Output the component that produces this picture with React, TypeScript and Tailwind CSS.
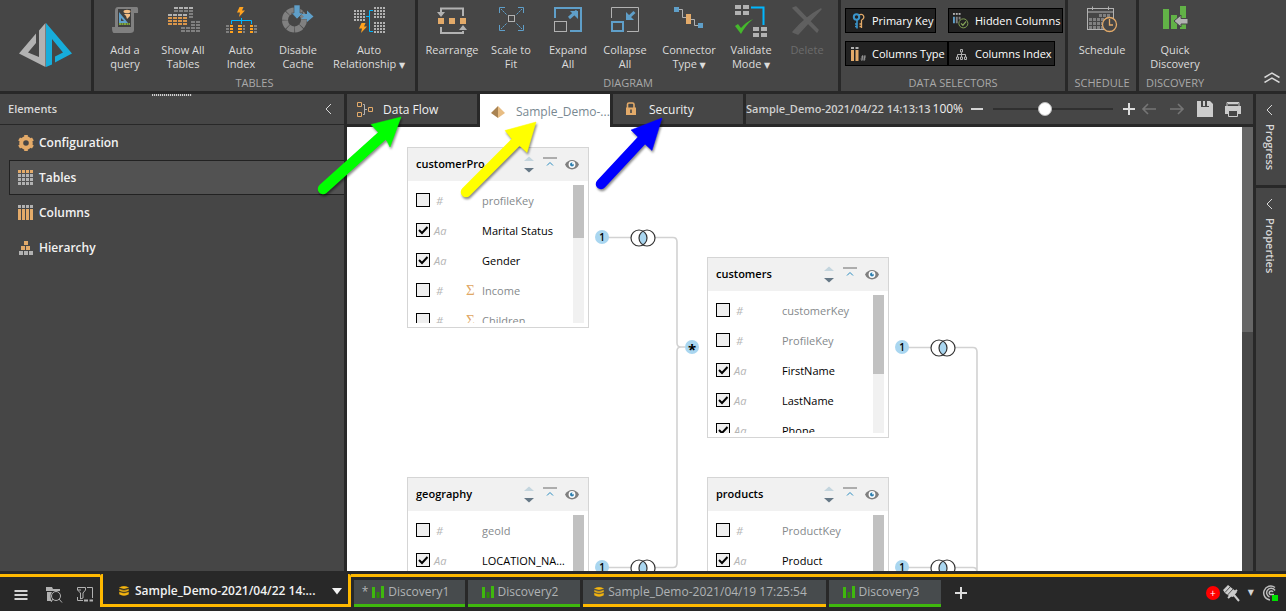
import React, { useState } from "react";

const GRAY = "#b2b2b2";
const DIM = "#808080";
const ORANGE = "#e3aa69";
const BLUE = "#5f9fc9";
const CYAN = "#00b7ff";

type CellsProps = { x: number; y: number; cols: number; rows: number; w?: number; h?: number; dx?: number; dy?: number; fill?: string };

function Cells({ x, y, cols, rows, w = 4, h = 2, dx = 5, dy = 3, fill = DIM }: CellsProps) {
  const out: React.ReactNode[] = [];
  for (let r = 0; r < rows; r++)
    for (let c = 0; c < cols; c++)
      out.push(<rect key={`${r}-${c}`} x={x + c * dx} y={y + r * dy} width={w} height={h} fill={fill} />);
  return <g>{out}</g>;
}

function Glyph({ box, className, children }: { box: string; className?: string; children: React.ReactNode }) {
  return (
    <svg viewBox={box} className={className ?? "h-8 w-9"} fill="none" aria-hidden="true">
      {children}
    </svg>
  );
}

const Bolt = ({ x, y }: { x: number; y: number }) => (
  <path transform={`translate(${x} ${y})`} d="M2.5 0H6.5L5 3.5H8L2 10L3 5.5H0Z" fill="#ffa21f" />
);

const icons = {
  query: (
    <Glyph box="107 5 36 32">
      <path d="M118 7H137Q138.500 7 138 13H134V30Q134 33 130 33H114Q112 33 112 27H115V11Q115 7 118 7Z" fill={DIM} />
      <rect x="118" y="9" width="13" height="18" fill="#3f3f3f" />
      <path d="M119 12V23H128Z" fill={BLUE} />
      <path d="M121 18V21H124Z" fill="#3f3f3f" />
      <ellipse cx="127" cy="11.500" rx="3.500" ry="1.800" fill="#f2bd86" />
      <path d="M124 14H130V16L127 19L126 16Z" fill="#f2bd86" />
      <path d="M119 24H130" stroke="#7fa63a" strokeWidth="2" strokeDasharray="2 .5" />
    </Glyph>
  ),
  showAll: (
    <Glyph box="165 5 36 32">
      <Cells x={174} y={7} cols={4} rows={1} fill={GRAY} />
      <Cells x={174} y={10} cols={4} rows={1} />
      <Cells x={189} y={13} cols={1} rows={2} />
      <Cells x={168} y={14} cols={4} rows={1} fill={GRAY} />
      <Cells x={168} y={17} cols={4} rows={3} fill="#d9954a" />
      <Cells x={191} y={21} cols={2} rows={2} />
      <Cells x={181} y={27} cols={4} rows={2} />
    </Glyph>
  ),
  autoIndex: (
    <Glyph box="224 5 36 32">
      <Bolt x={238} y={7} />
      <path d="M232.500 24V20.500H252.500V24M242.500 18V24" stroke={CYAN} />
      <Cells x={227} y={25} cols={1} rows={3} w={3} />
      <Cells x={231} y={25} cols={1} rows={3} w={3} fill="#ffa21f" />
      <Cells x={239} y={25} cols={1} rows={3} w={4} fill="#ffa21f" />
      <Cells x={244} y={25} cols={1} rows={3} w={2} />
      <Cells x={251} y={25} cols={1} rows={3} w={3} fill="#ffa21f" />
      <Cells x={255} y={25} cols={1} rows={3} w={3} />
    </Glyph>
  ),
  cache: (
    <Glyph box="281 5 36 32">
      <circle cx="295.500" cy="20" r="9.500" stroke={DIM} strokeWidth="6" strokeDasharray="6.860 .6" />
      <path d="M295 5H301V13H304L298 19L292.500 13H295Z" fill={BLUE} stroke="#464646" strokeWidth=".6" />
      <path d="M302 14H308V10.500L314.500 16.500L308 22V19H302L305 16.500Z" fill={BLUE} />
    </Glyph>
  ),
  relationship: (
    <Glyph box="351 5 36 32">
      <Cells x={354} y={10} cols={4} rows={4} w={2} dx={3} fill={GRAY} />
      <Cells x={374} y={7} cols={4} rows={4} w={2} dx={3} fill={GRAY} />
      <Cells x={374} y={22} cols={4} rows={4} w={2} dx={3} fill={GRAY} />
      <path d="M373 10.500H369.500V31.500H373M366 16.500H369.500" stroke={CYAN} />
      <Bolt x={359} y={23} />
    </Glyph>
  ),
  rearrange: (
    <Glyph box="435 5 36 32">
      <path d="M442 14V8.500H464V16M442 27V33H464V31" stroke={GRAY} strokeWidth="2" />
      <path d="M438 12H446L442 17ZM460 30H468L464 25Z" fill={GRAY} />
      <Cells x={439} y={18} cols={3} rows={1} w={6} h={6} dx={11} fill={ORANGE} />
    </Glyph>
  ),
  scale: (
    <Glyph box="494 5 36 32">
      <path d="M500.500 13V7.500H506M519 7.500H524.500V13M524.500 25V30.500H519M506 30.500H500.500V25" stroke={BLUE} />
      <path d="M502 9L508 15M523 9L517 15M502 29L508 23M523 29L517 23" stroke={BLUE} strokeDasharray="2 .6" />
      <rect x="509.500" y="15.500" width="6" height="6" stroke={GRAY} />
    </Glyph>
  ),
  expand: (
    <Glyph box="550 5 36 32">
      <path d="M555 18V8H581V31H570" stroke={BLUE} strokeWidth="2" />
      <rect x="554.500" y="21.500" width="12" height="10" stroke={GRAY} />
      <path d="M569 18L577 11" stroke={BLUE} strokeWidth="3" />
      <path d="M570 11H578V19Z" fill={BLUE} />
    </Glyph>
  ),
  collapse: (
    <Glyph box="608 5 36 32">
      <path d="M612.500 18V7.500H639.500V31.500H628" stroke={GRAY} />
      <rect x="613" y="22" width="11" height="9" stroke={BLUE} strokeWidth="2" />
      <path d="M635.500 12L629 18" stroke={BLUE} strokeWidth="3" />
      <path d="M627 12V20H635Z" fill={BLUE} />
    </Glyph>
  ),
  connector: (
    <Glyph box="672 5 36 32">
      <path d="M680 9.500H683.500V17.500H687M692 19.500H695.500V25.500H699" stroke={GRAY} />
      <rect x="675" y="7" width="5" height="5" fill={BLUE} />
      <rect x="687" y="14" width="5" height="10" fill={ORANGE} />
      <rect x="699" y="23" width="5" height="5" fill={BLUE} />
    </Glyph>
  ),
  validate: (
    <Glyph box="733 5 36 32">
      <Cells x={735} y={5} cols={2} rows={2} w={6} h={4} dx={8} dy={6} fill={GRAY} />
      <Cells x={753} y={27} cols={2} rows={2} w={6} h={4} dx={8} dy={6} fill={GRAY} />
      <path d="M751 7.500H763.500V25" stroke={CYAN} strokeWidth="2" />
      <path d="M735 26L738 24L741 28Q746 22 753 19Q745 26 741 34Z" fill="#45b82c" />
    </Glyph>
  ),
  remove: (
    <Glyph box="789 5 36 32">
      <path d="M793 8L796 7L818 30L817 32ZM821 9L798 34L793 32Q806 17 821 9Z" fill="#606060" stroke="#606060" strokeWidth="1.500" strokeLinejoin="round" />
    </Glyph>
  ),
  schedule: (
    <Glyph box="1084 5 36 32">
      <rect x="1087.500" y="8.500" width="26" height="21" stroke={GRAY} />
      <path d="M1087 12H1114M1092.500 6.500V10M1108.500 6.500V10" stroke={GRAY} />
      <Cells x={1099} y={14} cols={3} rows={1} w={3} h={3} dx={4} />
      <Cells x={1089} y={18} cols={6} rows={2} w={3} h={3} dx={4} dy={4} />
      <Cells x={1089} y={26} cols={4} rows={1} w={3} h={3} dx={4} />
      <circle cx="1109.500" cy="24.500" r="7" stroke={ORANGE} strokeWidth="1.300" fill="#464646" />
      <path d="M1109.500 19V25H1113" stroke={ORANGE} strokeWidth="1.300" />
    </Glyph>
  ),
  discovery: (
    <Glyph box="1157 5 36 32">
      <path d="M1163 9H1169V29H1163ZM1171 15H1177V29H1171ZM1180 6H1186V29H1180Z" fill="#62b247" />
      <path d="M1174 21L1181 15V18.500H1188V24H1181V27Z" fill={GRAY} stroke="#464646" />
    </Glyph>
  ),
};

function RibbonButton({ icon, lines, width, menu, disabled }: { icon: React.ReactNode; lines: string[]; width: string; menu?: boolean; disabled?: boolean }) {
  return (
    <button type="button" disabled={disabled} className={`flex ${width} flex-none flex-col items-center pt-[5px] text-[11px] leading-[14px] ${disabled ? "text-[#6c6c6c]" : "text-[#dcdcdc]"}`}>
      {icon}
      <span className="mt-1.5 whitespace-nowrap">
        {lines.map((l, i) => (
          <span key={l} className="block">
            {l}
            {menu && i === lines.length - 1 ? <span className="font-['DejaVu_Sans'] text-[8px]"> ▼</span> : null}
          </span>
        ))}
      </span>
    </button>
  );
}

function Section({ title, className, children }: { title: string; className?: string; children: React.ReactNode }) {
  return (
    <section className={`flex flex-col justify-between bg-[#464646] ${className ?? ""}`}>
      {children}
      <h2 className="pb-px text-center text-[11px] leading-[14px] text-[#a9a9a9]">{title}</h2>
    </section>
  );
}

function SelectorButton({ label, children }: { label: string; children: React.ReactNode }) {
  return (
    <button type="button" className="flex h-[25px] items-center gap-1.5 border border-black bg-[#222222] pr-0.5 pl-1 text-[11px] whitespace-nowrap text-white">
      {children}
      <span className="pt-0.5">{label}</span>
    </button>
  );
}

function Ribbon() {
  return (
    <header className="flex h-[91px] flex-none gap-[3px]">
      <div className="flex w-[91px] flex-none items-center justify-center bg-[#464646]">
        <svg viewBox="20 22 53 46" className="h-[46px] w-[53px]" role="img" aria-label="Pyramid">
          <path d="M46.500 22L40 29.500V56L29 51.500L37 42V32.500L20 52.500L46.500 66Z" fill={GRAY} />
          <path d="M47 22L73 52.500L56 61.500V55.500L64 51.500L53 38V63.500L47 66Z" fill="#17addb" />
        </svg>
      </div>
      <Section title="TABLES" className="w-[321px] flex-none">
        <div className="flex pl-0.5">
          <RibbonButton icon={icons.query} lines={["Add a", "query"]} width="w-[58px]" />
          <RibbonButton icon={icons.showAll} lines={["Show All", "Tables"]} width="w-[58px]" />
          <RibbonButton icon={icons.autoIndex} lines={["Auto", "Index"]} width="w-[58px]" />
          <RibbonButton icon={icons.cache} lines={["Disable", "Cache"]} width="w-[56px]" />
          <RibbonButton icon={icons.relationship} lines={["Auto", "Relationship"]} width="w-[86px]" menu />
        </div>
      </Section>
      <Section title="DIAGRAM" className="w-[420px] flex-none">
        <div className="flex pl-1">
          <RibbonButton icon={icons.rearrange} lines={["Rearrange"]} width="w-[60px]" />
          <RibbonButton icon={icons.scale} lines={["Scale to", "Fit"]} width="w-[58px]" />
          <RibbonButton icon={icons.expand} lines={["Expand", "All"]} width="w-[56px]" />
          <RibbonButton icon={icons.collapse} lines={["Collapse", "All"]} width="w-[58px]" />
          <RibbonButton icon={icons.connector} lines={["Connector", "Type"]} width="w-[70px]" menu />
          <RibbonButton icon={icons.validate} lines={["Validate", "Mode"]} width="w-[54px]" menu />
          <RibbonButton icon={icons.remove} lines={["Delete"]} width="w-[58px]" disabled />
        </div>
      </Section>
      <Section title="DATA SELECTORS" className="w-[224px] flex-none">
        <div className="grid grid-cols-[101px_auto] justify-items-start gap-x-0.5 gap-y-2 pt-2 pl-1">
          <SelectorButton label="Primary Key">
            <Glyph box="0 0 16 16" className="h-4 w-4">
              <path d="M9 2.500A2.700 2.700 0 1 1 11.500 6.800M11.500 7V15M11.500 11H9.500M11.500 13.500H9.500" stroke={ORANGE} strokeWidth="1.300" />
              <circle cx="6.500" cy="4" r="2.700" stroke="#3a95cc" strokeWidth="2" />
              <path d="M7 7V15.500M7 11H5M7 13.500H5" stroke="#3a95cc" strokeWidth="1.600" />
            </Glyph>
          </SelectorButton>
          <SelectorButton label="Hidden Columns">
            <Glyph box="1 0 17 17" className="h-4 w-4">
              <Cells x={1} y={0} cols={3} rows={1} w={2} h={2} dx={3} fill={GRAY} />
              <path d="M2 4V11" stroke={BLUE} strokeWidth="2" />
              <path d="M5 4V11M8 4V7" stroke={DIM} strokeWidth="2" />
              <circle cx="12" cy="11" r="4.800" stroke="#86a558" />
              <path d="M9.500 11L11.500 13L15 9" stroke="#86a558" strokeWidth="1.300" />
            </Glyph>
          </SelectorButton>
          <SelectorButton label="Columns Type">
            <Glyph box="0 0 16 16" className="h-4 w-4">
              <path d="M1 1H4V3H1ZM5.500 1H8.500V3H5.500Z" fill={GRAY} />
              <path d="M1 4H4V15H1ZM5.500 4H8.500V15H5.500Z" fill={ORANGE} />
              <path d="M12.800 9L11.800 15M15 9L14 15M11 11H16M10.500 13H15.500" stroke={GRAY} strokeWidth=".7" />
            </Glyph>
          </SelectorButton>
          <SelectorButton label="Columns Index">
            <Glyph box="0 0 16 16" className="h-4 w-4">
              <path d="M8.500 6.500V9M4.500 11V8.500H12.500V11M8.500 8V11" stroke={GRAY} />
              <path d="M7.500 3.500H9.500V6H7.500ZM3.500 11H5.500V13.500H3.500ZM7.500 11H9.500V13.500H7.500ZM11.500 11H13.500V13.500H11.500Z" stroke={GRAY} />
            </Glyph>
          </SelectorButton>
        </div>
      </Section>
      <Section title="SCHEDULE" className="w-[68px] flex-none">
        <div className="flex justify-center">
          <RibbonButton icon={icons.schedule} lines={["Schedule"]} width="w-[68px]" />
        </div>
      </Section>
      <div className="flex flex-1 justify-between bg-[#464646]">
        <Section title="DISCOVERY" className="w-[72px]">
          <div className="flex">
            <RibbonButton icon={icons.discovery} lines={["Quick", "Discovery"]} width="w-[72px]" />
          </div>
        </Section>
        <button type="button" aria-label="Collapse ribbon" className="self-end px-1.5 pb-2">
          <Glyph box="0 0 16 11" className="h-[11px] w-4">
            <path d="M.5 5.500L8 1L15.500 5.500M.5 10.500L8 6L15.500 10.500" stroke="#d8d8d8" strokeWidth="1.500" />
          </Glyph>
        </button>
      </div>
    </header>
  );
}

const elementItems = [
  {
    name: "Configuration",
    icon: (
      <Glyph box="0 0 16 16" className="h-4 w-4">
        <circle cx="8" cy="8" r="4.800" stroke={ORANGE} strokeWidth="4" />
        <path d="M8 0V2M8 14V16M1.100 4L2.800 5M13.200 11L14.900 12M1.100 12L2.800 11M13.200 5L14.900 4" stroke={ORANGE} strokeWidth="3.600" />
      </Glyph>
    ),
  },
  {
    name: "Tables",
    icon: (
      <Glyph box="0 0 16 16" className="h-4 w-4">
        <Cells x={0} y={0} cols={4} rows={1} w={3} h={3} dx={4} fill={ORANGE} />
        <Cells x={0} y={4} cols={4} rows={3} w={3} h={3} dx={4} dy={4} fill={GRAY} />
      </Glyph>
    ),
  },
  {
    name: "Columns",
    icon: (
      <Glyph box="0 0 16 16" className="h-4 w-4">
        <Cells x={0} y={0} cols={4} rows={1} w={3} h={3} dx={4} fill={GRAY} />
        <Cells x={0} y={4} cols={4} rows={1} w={3} h={11} dx={4} fill={ORANGE} />
      </Glyph>
    ),
  },
  {
    name: "Hierarchy",
    icon: (
      <Glyph box="0 0 16 16" className="h-4 w-4">
        <Cells x={6} y={1} cols={1} rows={1} w={4} h={4} fill={ORANGE} />
        <Cells x={3} y={6} cols={2} rows={1} w={4} h={4} dx={5} fill={ORANGE} />
        <Cells x={1} y={11} cols={3} rows={1} w={4} h={4} dx={5} fill={GRAY} />
      </Glyph>
    ),
  },
];

const ChevronLeft = () => (
  <Glyph box="0 0 7 12" className="h-3 w-[7px]">
    <path d="M6 1L1 6L6 11" stroke="#d8d8d8" />
  </Glyph>
);

function ElementsPanel() {
  const [selected, setSelected] = useState("Tables");
  return (
    <aside className="relative w-[344px] flex-none bg-[#464646]">
      <div className="absolute top-0 left-[152px] h-0.5 w-10 bg-[repeating-linear-gradient(90deg,#d0d0d0_0_1px,#5a5a5a_1px_2px)]" />
      <div className="flex h-[31px] items-center justify-between border-b border-[#282828] pr-3 pl-2">
        <h2 className="text-[11px] font-semibold text-[#d8d8d8]">Elements</h2>
        <button type="button" aria-label="Collapse elements">
          <ChevronLeft />
        </button>
      </div>
      <ul className="pl-[9px]">
        {elementItems.map((it) => (
          <li key={it.name}>
            <button
              type="button"
              onClick={() => setSelected(it.name)}
              className={`flex h-[35px] w-full items-center gap-[5px] border border-r-0 pl-2 text-[12px] font-semibold text-[#f2f2f2] ${selected === it.name ? "border-[#222222] bg-[#525252]" : "border-transparent"}`}
            >
              {it.icon}
              {it.name}
            </button>
          </li>
        ))}
      </ul>
    </aside>
  );
}

function TabBar() {
  const [zoom, setZoom] = useState(43);
  return (
    <div className="flex h-[33px] flex-none gap-[3px] text-[12px] text-[#f0f0f0]">
      <button type="button" className="flex h-[30px] w-[130px] flex-none items-center gap-2.5 bg-[#464646] pl-2.5">
        <Glyph box="0 0 16 16" className="h-4 w-4">
          <path d="M.5 1.500H4.500V5.500H.5ZM.5 11.500H4.500V15.500H.5ZM11.500 6.500H15.500V10.500H11.500Z" stroke={ORANGE} />
          <path d="M6 3.500H7.500V13.500H6M7.500 8.500H10" stroke={GRAY} />
        </Glyph>
        <span className="pt-0.5">Data Flow</span>
      </button>
      <button type="button" className="flex w-[130px] flex-none items-center gap-2.5 bg-white pt-0.5 pl-2.5 whitespace-nowrap text-[#788891]">
        <Glyph box="0 0 16 16" className="h-4 w-4 flex-none">
          <path d="M8 2L1 9L8 14Z" fill="#a98352" />
          <path d="M8 2L15 9L8 14Z" fill="#e8bd83" />
        </Glyph>
        Sample_Demo-...
      </button>
      <button type="button" className="flex h-[30px] w-[130px] flex-none items-center gap-2.5 bg-[#464646] pl-2.5">
        <Glyph box="0 0 16 16" className="h-4 w-4">
          <path d="M4.500 7V3.500Q4.500 2 6 2H9.500Q11 2 11 3.500V7" stroke={ORANGE} strokeWidth="1.600" />
          <path d="M3 6.500H13V14H3Z" fill={ORANGE} />
          <path d="M8 8.500V12" stroke="#464646" strokeWidth="1.600" />
        </Glyph>
        <span className="pt-0.5">Security</span>
      </button>
      <div className="flex h-[30px] min-w-0 flex-1 items-center bg-[#464646] pr-3">
        <span className="text-[11px] font-semibold whitespace-nowrap text-[#d0d0d0]">Sample_Demo-2021/04/22 14:13:13</span>
        <span className="w-10 flex-none pl-0.5">100%</span>
        <button type="button" aria-label="Zoom out" className="h-0.5 w-3 flex-none bg-[#d4d4d4]" />
        <input
          type="range"
          aria-label="Zoom"
          min={0}
          max={100}
          value={zoom}
          onChange={(e) => setZoom(Number(e.target.value))}
          className="mx-2.5 h-0.5 min-w-0 flex-1 appearance-none bg-[#303030] [&::-webkit-slider-thumb]:h-3.5 [&::-webkit-slider-thumb]:w-3.5 [&::-webkit-slider-thumb]:appearance-none [&::-webkit-slider-thumb]:rounded-full [&::-webkit-slider-thumb]:border [&::-webkit-slider-thumb]:border-[#bbbbbb] [&::-webkit-slider-thumb]:bg-white"
        />
        <button type="button" aria-label="Zoom in">
          <Glyph box="0 0 12 12" className="h-3 w-3">
            <path d="M0 6H12M6 0V12" stroke="#dddddd" strokeWidth="2" />
          </Glyph>
        </button>
        <button type="button" aria-label="Undo" className="ml-1.5">
          <Glyph box="0 0 16 12" className="h-3 w-4">
            <path d="M15 6H2M7 1L2 6L7 11" stroke="#757575" strokeWidth="1.600" />
          </Glyph>
        </button>
        <button type="button" aria-label="Redo" className="ml-3">
          <Glyph box="0 0 16 12" className="h-3 w-4">
            <path d="M1 6H14M9 1L14 6L9 11" stroke="#757575" strokeWidth="1.600" />
          </Glyph>
        </button>
        <button type="button" aria-label="Save" className="ml-3">
          <Glyph box="0 0 16 16" className="h-4 w-4">
            <path d="M0 0H13L16 3V16H0Z" fill="#cccccc" />
            <path d="M4 0H12V6H4Z" fill="#464646" />
            <path d="M6 0H8V5H6ZM10 0H12V5H10Z" fill="#cccccc" />
          </Glyph>
        </button>
        <button type="button" aria-label="Print" className="ml-3">
          <Glyph box="0 0 16 16" className="h-4 w-4">
            <path d="M3 2.500H13" stroke="#cccccc" strokeWidth="2" />
            <path d="M0 5H16V13H0Z" fill="#cccccc" />
            <path d="M3.500 9.500H12.500V15.500H3.500Z" fill="#464646" stroke="#cccccc" />
            <path d="M2 5V1.500H14V5" stroke="#cccccc" />
            <path d="M3 3.500H13V5H3Z" fill="#464646" />
          </Glyph>
        </button>
      </div>
    </div>
  );
}

type Field = { name: string; kind: "#" | "Aa"; sum?: boolean; checked?: boolean };
type TableNode = { name: string; place: string; thumb: string; fields: Field[] };

const tables: TableNode[] = [
  {
    name: "customerPro",
    place: "left-[60px] top-5",
    thumb: "h-[53px]",
    fields: [
      { name: "profileKey", kind: "#" },
      { name: "Marital Status", kind: "Aa", checked: true },
      { name: "Gender", kind: "Aa", checked: true },
      { name: "Income", kind: "#", sum: true },
      { name: "Children", kind: "#", sum: true },
    ],
  },
  {
    name: "customers",
    place: "left-[360px] top-[130px]",
    thumb: "h-[79px]",
    fields: [
      { name: "customerKey", kind: "#" },
      { name: "ProfileKey", kind: "#" },
      { name: "FirstName", kind: "Aa", checked: true },
      { name: "LastName", kind: "Aa", checked: true },
      { name: "Phone", kind: "Aa", checked: true },
    ],
  },
  {
    name: "geography",
    place: "left-[60px] top-[350px]",
    thumb: "h-[100px]",
    fields: [
      { name: "geoId", kind: "#" },
      { name: "LOCATION_NAME", kind: "Aa", checked: true },
    ],
  },
  {
    name: "products",
    place: "left-[360px] top-[350px]",
    thumb: "h-[100px]",
    fields: [
      { name: "ProductKey", kind: "#" },
      { name: "Product", kind: "Aa", checked: true },
    ],
  },
];

function FieldRow({ field, table }: { field: Field; table: string }) {
  const id = `${table}-${field.name}`;
  return (
    <li className="flex h-[30px] items-center">
      <span className="grid h-3.5 w-3.5 flex-none">
        <input id={id} type="checkbox" defaultChecked={field.checked} className="peer col-start-1 row-start-1 h-3.5 w-3.5 appearance-none border border-black bg-[#efefef]" />
        <svg viewBox="0 0 14 14" className="pointer-events-none invisible col-start-1 row-start-1 h-3.5 w-3.5 peer-checked:visible" fill="none" aria-hidden="true">
          <path d="M3 7L6 10L11.500 4" stroke="#000" strokeWidth="2" />
        </svg>
      </span>
      <span className={`w-8 flex-none pt-0.5 text-[11px] text-[#b4b4b4] italic ${field.kind === "#" ? "pl-1.5" : "pl-1"}`}>{field.kind}</span>
      <span className="w-5 flex-none pl-1 font-['Liberation_Serif'] text-[15px] text-[#dfa765]">{field.sum ? "Σ" : ""}</span>
      <label htmlFor={id} className={`mr-1 min-w-0 flex-1 truncate pt-0.5 text-[11px] ${field.checked ? "text-black" : "text-[#85898c]"}`}>
        {field.name}
      </label>
    </li>
  );
}

function TableCard({ table }: { table: TableNode }) {
  return (
    <article className={`absolute ${table.place} flex h-[181px] w-[182px] flex-col border border-[#d5d5d5] bg-white pb-1`}>
      <header className="flex h-[33px] flex-none items-center bg-[#f1f1f1] pr-[9px] pl-2">
        <h3 className="flex-1 text-[11px] font-semibold text-black">{table.name}</h3>
        <button type="button" aria-label="Sort">
          <Glyph box="0 0 12 18" className="h-[18px] w-3">
            <path d="M1 5L6 .5L11 5Z" fill="#c4d5de" />
            <path d="M1 12L6 16.500L11 12Z" fill="#667886" />
          </Glyph>
        </button>
        <button type="button" aria-label="Fold" className="ml-2">
          <Glyph box="0 0 14 18" className="h-[18px] w-3.5">
            <path d="M0 2H14" stroke="#adadad" strokeWidth="2" />
            <path d="M4 9.500L7 6.500L10 9.500" stroke="#2b8cc0" />
          </Glyph>
        </button>
        <button type="button" aria-label="Preview" className="ml-2">
          <Glyph box="0 0 14 12" className="h-3 w-3.5">
            <path d="M0 5.500C3-.5 11-.5 14 5.500C11 12 3 12 0 5.500Z" fill="#7f7f7f" />
            <circle cx="7" cy="5.500" r="3.400" fill="#ffffff" />
            <circle cx="7" cy="5.500" r="2" fill="#2b7fb0" />
            <circle cx="8" cy="4.500" r=".9" fill="#ffffff" />
          </Glyph>
        </button>
      </header>
      <div className="mt-1 flex min-h-0 flex-1 pr-1 pl-2">
        <ul className="min-w-0 flex-1 overflow-hidden">
          {table.fields.map((f) => (
            <FieldRow key={f.name} field={f} table={table.name} />
          ))}
        </ul>
        <div className="w-[11px] flex-none bg-[#f1f1f1]">
          <div className={`${table.thumb} bg-[#c1c1c1]`} />
        </div>
      </div>
    </article>
  );
}

function Join({ x, y }: { x: number; y: number }) {
  return (
    <g>
      <circle cx={x} cy={y} r="7" fill="#a9d6f0" />
      <text x={x} y={y + 3.5} textAnchor="middle" className="fill-black font-['Open_Sans'] text-[10px] font-semibold">
        1
      </text>
      <circle cx={x + 37} cy={y + 1} r="8" fill="#fff" />
      <circle cx={x + 45} cy={y + 1} r="8" fill="#fff" />
      <path d={`M${x + 41} ${y - 5.9}A8 8 0 0 1 ${x + 41} ${y + 7.9}A8 8 0 0 1 ${x + 41} ${y - 5.9}Z`} fill="#a9d6f0" />
      <circle cx={x + 37} cy={y + 1} r="8" fill="none" stroke="#333" strokeWidth="1.200" />
      <circle cx={x + 45} cy={y + 1} r="8" fill="none" stroke="#333" strokeWidth="1.200" />
    </g>
  );
}

function Canvas() {
  return (
    <div className="flex min-h-0 flex-1">
      <div className="relative min-w-0 flex-1 overflow-hidden bg-white">
        <svg className="absolute top-0 left-0 h-[460px] w-[700px]" viewBox="0 0 700 460" fill="none">
          <path d="M261 110.500H326Q330 110.500 330 115V216Q330 220 334 220H338M261 440.500H326Q330 440.500 330 436V224Q330 220 334 220" stroke="#d2d2d2" strokeWidth="1.600" />
          <path d="M561 220.500H626Q630 220.500 630 225V460M561 440.500H626Q630 440.500 630 445" stroke="#d2d2d2" strokeWidth="1.600" />
          <Join x={255} y={110} />
          <Join x={255} y={440} />
          <Join x={555} y={220} />
          <Join x={555} y={440} />
          <circle cx="345" cy="220" r="7" fill="#a9d6f0" />
          <text x="345" y="228" textAnchor="middle" className="fill-black font-['Open_Sans'] text-[15px] font-bold">
            *
          </text>
        </svg>
        {tables.map((t) => (
          <TableCard key={t.name} table={t} />
        ))}
      </div>
      <div className="w-[11px] flex-none bg-[#484848]">
        <div className="h-[205px] bg-[#666666]" />
      </div>
    </div>
  );
}

function SideRail() {
  return (
    <aside className="flex w-[30px] flex-none flex-col gap-[3px] text-[11px] font-semibold text-[#d8d8d8]">
      <button type="button" className="flex h-[91px] flex-none flex-col items-center gap-2 bg-[#464646] pt-2.5 pr-[3px]">
        <ChevronLeft />
        <span className="[writing-mode:vertical-rl]">Progress</span>
      </button>
      <button type="button" className="flex flex-1 flex-col items-center gap-2 bg-[#464646] pt-2.5 pr-[3px]">
        <ChevronLeft />
        <span className="[writing-mode:vertical-rl]">Properties</span>
      </button>
    </aside>
  );
}

const Bars = () => (
  <Glyph box="0 0 12 12" className="h-3 w-3">
    <path d="M0 1H3V12H0ZM9 0H12V12H9Z" fill="#3fb80e" />
    <path d="M4.500 6H7.500V12H4.500Z" fill="#2d8a0a" />
  </Glyph>
);

const Stack = () => (
  <Glyph box="0 0 10 10" className="h-2.5 w-2.5">
    <path d="M.5 1.500Q5-.8 9.500 1.500Q5 3.800.5 1.500ZM.5 3.200Q5 5.600 9.500 3.200V4.600Q5 7 .5 4.600ZM.5 6Q5 8.400 9.500 6V8.200Q5 11 .5 8.200Z" fill="#f5b50f" stroke="#f5b50f" strokeWidth=".4" />
  </Glyph>
);

function DocTab({ label, width, model, dirty }: { label: string; width: string; model?: boolean; dirty?: boolean }) {
  return (
    <button type="button" className={`flex h-[27px] ${width} flex-none items-center justify-center gap-1 border-b-[3px] bg-[#474b4d] pr-2 text-[12px] whitespace-nowrap text-[#b0b3b5] ${model ? "border-[#ffb900]" : "border-[#3fb80e]"}`}>
      {dirty ? <span>*</span> : null}
      {model ? <Stack /> : <Bars />}
      {label}
    </button>
  );
}

function BottomBar() {
  return (
    <footer className="flex h-10 flex-none bg-[#282828] pt-[3px] text-[#d4d4d4]">
      <div className="flex h-[34px] w-[100px] flex-none items-center gap-3.5 border-t-[3px] border-[#ffb900] pt-1 pl-3.5">
        <button type="button" aria-label="Menu">
          <Glyph box="0 0 14 12" className="h-3 w-3.5">
            <path d="M.5 2H13.500M.5 6H13.500M.5 10H13.500" stroke="#d4d4d4" strokeWidth="2" />
          </Glyph>
        </button>
        <button type="button" aria-label="Find content" className="ml-1">
          <Glyph box="0 0 17 17" className="h-[17px] w-[17px]">
            <path d="M0 1H6L7 3H14V5H0ZM1 6H6Q3 10 6 15H1Z" fill={GRAY} />
            <circle cx="10" cy="10" r="4.500" stroke={GRAY} />
            <path d="M13 13L16 16.500M7 13L5 16" stroke={GRAY} />
          </Glyph>
        </button>
        <button type="button" aria-label="Filters">
          <Glyph box="0 0 17 17" className="h-[17px] w-[17px]">
            <path d="M.5 1.500H8.500V4L6 7V12L3.500 13V7L.5 4ZM10 1.500H15.500V12M.5 11V14.500H6M1 4H4" stroke={GRAY} />
            <path d="M7 14.500H11M12.500 14.500H16" stroke={GRAY} strokeWidth="2" />
          </Glyph>
        </button>
      </div>
      <button type="button" className="flex h-[33px] w-[251px] flex-none items-center rounded-t-xs border-x-[3px] border-b-[3px] border-[#ffb900] pt-1 pr-1.5 pl-4 text-[12px] font-semibold text-[#f2f2f2]">
        <Stack />
        <span className="min-w-0 flex-1 truncate pl-1.5 text-left">Sample_Demo-2021/04/22 14:...</span>
        <Glyph box="0 0 10 7" className="ml-1 h-[7px] w-2.5">
          <path d="M0 0H10L5 6.500Z" fill="#f2f2f2" />
        </Glyph>
      </button>
      <div className="flex min-w-0 flex-1 items-start gap-[3px] border-t-[3px] border-[#ffb900] pt-[3px] pl-[3px]">
        <DocTab label="Discovery1" width="w-[111px]" dirty />
        <DocTab label="Discovery2" width="w-[112px]" />
        <DocTab label="Sample_Demo-2021/04/19 17:25:54" width="w-[243px]" model />
        <DocTab label="Discovery3" width="w-[112px]" />
        <button type="button" aria-label="New tab" className="ml-[11px] flex h-[26px] items-center">
          <Glyph box="0 0 12 12" className="h-3 w-3">
            <path d="M0 6H12M6 0V12" stroke="#dddddd" strokeWidth="2" />
          </Glyph>
        </button>
        <div className="ml-auto flex h-[26px] items-center gap-0.5 pr-2">
          <span className="flex h-3.5 w-3.5 items-center justify-center rounded-full bg-[#ff0000] text-[10px] text-white">+</span>
          <button type="button" aria-label="Pins">
            <Glyph box="0 0 18 18" className="h-[18px] w-[18px]">
              <path d="M1 6L6 1L9 3.500L15 8L11 13L7 12L3 9Z" fill="#cccccc" />
              <path d="M6 14L15 6M12 11L17 17" stroke="#cccccc" strokeWidth="2" />
              <path d="M3 8.500L8 3M5.500 11L11 5" stroke="#444" strokeWidth=".9" />
            </Glyph>
          </button>
          <span className="px-1.5 font-['DejaVu_Sans'] text-[8px]">▼</span>
          <button type="button" aria-label="Assistant">
            <Glyph box="0 0 16 16" className="h-4 w-4">
              <path d="M13 2.500A7 7 0 1 0 8 15M13 5.500A4.500 4.500 0 1 0 7.500 12M11 7A2 2 0 1 0 8 9.500H12" stroke="#bdbdbd" strokeWidth="1.500" />
              <path d="M10 10H16V16H10Z" fill="#00e000" />
            </Glyph>
          </button>
        </div>
      </div>
    </footer>
  );
}

function PointerArrows() {
  const arrows = [
    { color: "#00ff00", tail: [323, 189], neck: [383, 135], head: "401,117 371,124.500 378,132 387,141 390,147" },
    { color: "#ffff00", tail: [466, 192], neck: [516, 142], head: "536,122 505,130.500 511,138 520,146 527,152.500" },
    { color: "#0000ff", tail: [601, 184], neck: [642, 140], head: "662,118 631,130 637,136 646,145 652,150.500" },
  ];
  return (
    <svg className="pointer-events-none absolute top-0 left-0 h-[220px] w-[700px] drop-shadow-[1px_2px_1px_rgba(0,0,0,0.45)]" viewBox="0 0 700 220" aria-hidden="true">
      {arrows.map((a) => (
        <g key={a.color} fill={a.color} stroke={a.color}>
          <path d={`M${a.tail[0]} ${a.tail[1]}L${a.neck[0]} ${a.neck[1]}`} strokeWidth="10.500" strokeLinecap="round" />
          <polygon points={a.head} strokeWidth=".5" />
        </g>
      ))}
    </svg>
  );
}

export default function App() {
  return (
    <div className="relative flex h-screen flex-col overflow-hidden bg-[#282828] font-['Open_Sans','Noto_Sans',sans-serif]">
      <Ribbon />
      <div className="mt-[3px] flex min-h-0 flex-1 gap-[3px]">
        <ElementsPanel />
        <main className="flex min-w-0 flex-1 flex-col">
          <TabBar />
          <Canvas />
        </main>
        <SideRail />
      </div>
      <BottomBar />
      <PointerArrows />
    </div>
  );
}
